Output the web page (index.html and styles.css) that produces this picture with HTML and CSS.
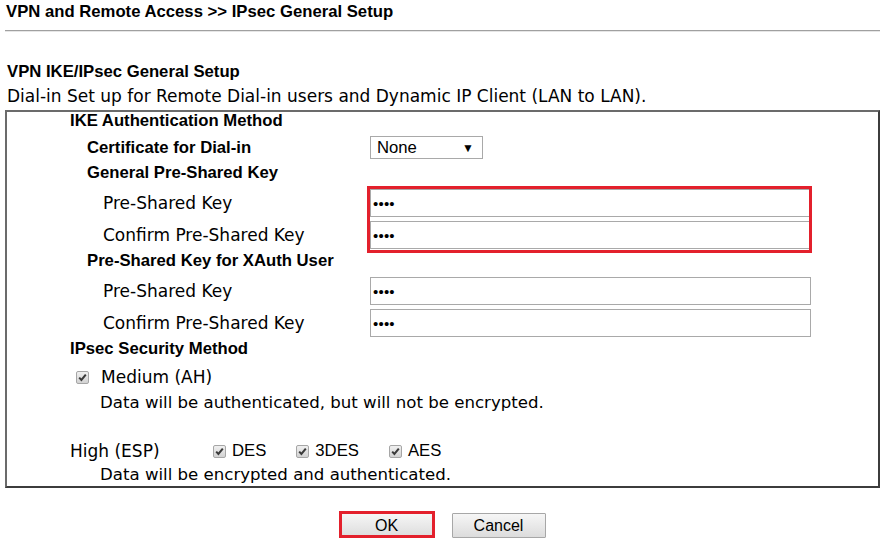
FILE: index.html
```html
<!DOCTYPE html>
<html>
<head>
<meta charset="utf-8">
<link rel="stylesheet" href="styles.css">
</head>
<body>
<div class="page">
  <div class="title">VPN and Remote Access &gt;&gt; IPsec General Setup</div>
  <div class="rule"></div>
  <div class="subtitle">VPN IKE/IPsec General Setup</div>
  <div class="desc">Dial-in Set up for Remote Dial-in users and Dynamic IP Client (LAN to LAN).</div>
  <div class="box">
    <div class="row r-ike"><span class="bold ind1">IKE Authentication Method</span></div>
    <div class="row r-cert">
      <span class="bold ind2 lbl2">Certificate for Dial-in</span>
      <div class="select"><span>None</span><span class="arrow">&#9660;</span></div>
    </div>
    <div class="row r-general"><span class="bold ind2">General Pre-Shared Key</span></div>
    <div class="group g-general">
      <div class="row r-field"><span class="reg ind3 lbl3">Pre-Shared Key</span><div class="pw">&#8226;&#8226;&#8226;&#8226;</div></div>
      <div class="row r-field"><span class="reg ind3 lbl3">Confirm Pre-Shared Key</span><div class="pw">&#8226;&#8226;&#8226;&#8226;</div></div>
      <div class="hl-inputs"></div>
    </div>
    <div class="row r-xauth"><span class="bold ind2">Pre-Shared Key for XAuth User</span></div>
    <div class="group g-xauth">
      <div class="row r-field"><span class="reg ind3 lbl3">Pre-Shared Key</span><div class="pw">&#8226;&#8226;&#8226;&#8226;</div></div>
      <div class="row r-field"><span class="reg ind3 lbl3">Confirm Pre-Shared Key</span><div class="pw">&#8226;&#8226;&#8226;&#8226;</div></div>
    </div>
    <div class="row r-ipsec"><span class="bold ind1">IPsec Security Method</span></div>
    <div class="row r-medium">
      <span class="cb cb-medium"><svg width="13" height="13" viewBox="0 0 13 13"><path d="M3.2 6.6 L5.4 9 L9.8 3.6" fill="none" stroke="#3a3a3a" stroke-width="2"/></svg></span>
      <span class="reg">Medium (AH)</span>
    </div>
    <div class="row r-data1"><span class="reg data ind-data">Data will be authenticated, but will not be encrypted.</span></div>
    <div class="row r-high">
      <span class="reg ind1 lbl-high">High (ESP)</span>
      <span class="opt"><span class="cb"><svg width="13" height="13" viewBox="0 0 13 13"><path d="M3.2 6.6 L5.4 9 L9.8 3.6" fill="none" stroke="#3a3a3a" stroke-width="2"/></svg></span><span class="arial">DES</span></span>
      <span class="opt"><span class="cb"><svg width="13" height="13" viewBox="0 0 13 13"><path d="M3.2 6.6 L5.4 9 L9.8 3.6" fill="none" stroke="#3a3a3a" stroke-width="2"/></svg></span><span class="arial">3DES</span></span>
      <span class="opt"><span class="cb"><svg width="13" height="13" viewBox="0 0 13 13"><path d="M3.2 6.6 L5.4 9 L9.8 3.6" fill="none" stroke="#3a3a3a" stroke-width="2"/></svg></span><span class="arial">AES</span></span>
    </div>
    <div class="row r-data2"><span class="reg data ind-data">Data will be encrypted and authenticated.</span></div>
  </div>
  <div class="buttons">
    <span class="hl-btn"><button class="btn">OK</button></span>
    <button class="btn">Cancel</button>
  </div>
</div>
</body>
</html>
```

FILE: styles.css
```css
html, body {
  margin: 0;
  padding: 0;
  background: #ffffff;
  color: #000000;
}

.page {
  width: 875px;
  margin-left: 5px;
  font-family: "DejaVu Sans", Verdana, sans-serif;
}

.title {
  font-family: "Liberation Sans", Arial, sans-serif;
  font-weight: bold;
  font-size: 16.7px;
  line-height: 20px;
  padding-top: 2px;
  padding-left: 1px;
}

.rule {
  margin-top: 8px;
  border-top: 1px solid #a0a0a0;
  border-bottom: 1px solid #e6e6e6;
}

.subtitle {
  font-family: "Liberation Sans", Arial, sans-serif;
  font-weight: bold;
  font-size: 16.7px;
  line-height: 20px;
  margin-top: 30px;
  padding-left: 2px;
}

.desc {
  font-size: 17px;
  line-height: 20px;
  margin-top: 4px;
  padding-left: 2px;
}

.box {
  margin-top: 4px;
  border-style: solid;
  border-width: 2px;
  border-color: #6b6b6b #3c3c3c #3c3c3c #6b6b6b;
  padding-bottom: 1px;
}

.row {
  display: flex;
  align-items: center;
}

.bold {
  font-family: "Liberation Sans", Arial, sans-serif;
  font-weight: bold;
  font-size: 16.7px;
  line-height: 20px;
}

.reg {
  font-family: "DejaVu Sans", Verdana, sans-serif;
  font-size: 17px;
  line-height: 20px;
}

.reg.data {
  font-size: 16.6px;
}

.arial {
  font-family: "Liberation Sans", Arial, sans-serif;
  font-size: 16.7px;
  line-height: 20px;
}

.ind1 { padding-left: 63px; }
.ind2 { padding-left: 80px; }
.ind3 { padding-left: 96px; }
.ind-data { padding-left: 93px; }

.lbl2 { width: 283px; flex: none; }
.lbl3 { width: 267px; flex: none; }

.r-ike { height: 18px; }
.r-cert { height: 35px; }
.r-general { height: 16px; }
.r-field { height: 32px; }
.r-xauth { height: 20px; }
.r-ipsec { height: 20px; }
.r-medium { height: 36px; }
.r-data1 { height: 16px; }
.r-high { height: 20px; margin-top: 30px; }
.r-data2 { height: 20px; margin-top: 4px; }

.group { position: relative; }
.g-general { margin-top: 6px; }
.g-xauth { margin-top: 4px; }

.select {
  width: 113px;
  height: 23px;
  box-sizing: border-box;
  border: 1px solid #a9a9a9;
  display: flex;
  align-items: center;
  justify-content: space-between;
  padding: 0 8px 0 6px;
  font-family: "Liberation Sans", Arial, sans-serif;
  font-size: 16.7px;
  background: #ffffff;
}

.select .arrow {
  font-size: 12px;
  line-height: 12px;
}

.pw {
  width: 441px;
  height: 28px;
  box-sizing: border-box;
  border: 1px solid #a9a9a9;
  display: flex;
  align-items: center;
  padding-left: 2px;
  font-family: "Liberation Sans", Arial, sans-serif;
  font-size: 15px;
  letter-spacing: 0.2px;
  background: #ffffff;
}

.hl-inputs {
  position: absolute;
  top: -1px;
  bottom: -2px;
  left: 360px;
  width: 445px;
  border: 3px solid #e3202c;
  box-sizing: border-box;
  pointer-events: none;
}

.cb {
  width: 13px;
  height: 13px;
  box-sizing: border-box;
  border: 1px solid #a6a6a6;
  border-radius: 2px;
  background: linear-gradient(#f0f0f0, #d2d2d2);
  display: inline-flex;
  align-items: center;
  justify-content: center;
  flex: none;
}

.cb svg {
  display: block;
  margin: -1px;
}

.cb-medium {
  margin-left: 69px;
  margin-right: 12px;
}

.lbl-high {
  width: 143px;
  flex: none;
}

.opt {
  display: inline-flex;
  align-items: center;
  margin-right: 30px;
}

.opt .cb {
  margin-right: 6px;
}

.buttons {
  display: flex;
  justify-content: center;
  gap: 18px;
  margin-top: 25px;
}

.hl-btn {
  position: relative;
  display: inline-flex;
}

.hl-btn::after {
  content: "";
  position: absolute;
  top: -2px;
  left: -1px;
  right: -1px;
  bottom: 0;
  border: 3px solid #e3202c;
  pointer-events: none;
}

.btn {
  width: 94px;
  height: 25px;
  margin: 0;
  padding: 0;
  box-sizing: border-box;
  border: 1px solid #a7a7a7;
  border-radius: 1px;
  background: linear-gradient(#f6f6f6, #dcdcdc);
  font-family: "Liberation Sans", Arial, sans-serif;
  font-size: 16px;
  color: #000000;
}
```
